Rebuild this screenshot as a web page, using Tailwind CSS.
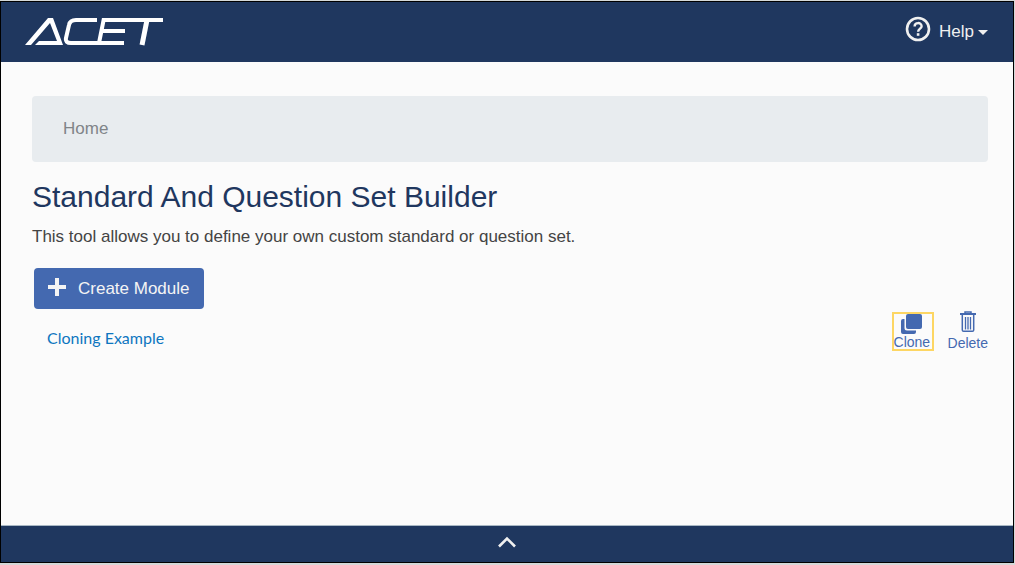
<!DOCTYPE html>
<html lang="en">
<head>
<meta charset="utf-8">
<meta name="viewport" content="width=device-width, initial-scale=1">
<title>ACET - Standard And Question Set Builder</title>
<script src="https://cdn.jsdelivr.net/npm/@tailwindcss/browser@4"></script>
</head>
<body class="flex min-h-screen flex-col bg-[#d4d8d8] pt-px pr-px pb-0.5 font-['Liberation_Sans',Arial,sans-serif]">
<div class="flex grow flex-col border border-black bg-[#fbfbfb]">
  <header class="flex h-[60px] items-center justify-between bg-[#1f375f] pr-[25px] pl-6">
    <a href="#" aria-label="ACET home" class="block">
      <svg class="block h-7 w-[138px]" viewBox="0 0 138 28" fill="none" stroke="#fff" stroke-width="4" aria-hidden="true">
        <path fill="#fff" stroke="none" d="M0 27 23 0h5l10 27H10l4-4h18L25 5 6 27z"/>
        <path d="M72 2H51q-6 0-7 5l-3 13q-1 5 5 5h53M79 0l-5 25M77 2h61M77 13h23"/>
        <path stroke-width="5" d="m122 2-5 25"/>
      </svg>
    </a>
    <button type="button" class="flex items-center text-[17px] text-[#f0f0f0]">
      <svg class="mr-2 mb-1.5 size-[26px]" viewBox="0 0 26 26" fill="none" stroke="#f0f0f0" aria-hidden="true">
        <circle cx="13" cy="13" r="11" stroke-width="2.6"/>
        <path stroke-width="2.4" d="M9.600 10.400C9.600 6 16.600 6 16.600 10.200 16.600 12.600 13.100 12.800 13.100 15.800"/>
        <path stroke-width="2.6" d="M13.100 17.200v2.600"/>
      </svg>
      <span>Help</span>
      <svg class="ml-1 h-[5px] w-2.5" viewBox="0 0 10 5" fill="#f0f0f0" aria-hidden="true"><path d="M0 0h10L5 5z"/></svg>
    </button>
  </header>

  <main class="grow pt-[34px] pr-[25px] pl-[31px]">
    <nav aria-label="Breadcrumb" class="flex h-[66px] items-center rounded bg-[#e8ecef] px-[31px] text-[17px] text-[#808488]">
      <a href="#">Home</a>
    </nav>
    <h1 class="mt-[15px] text-[30px] leading-10 text-[#1f375f]">Standard And Question Set Builder</h1>
    <p class="mt-1.5 text-[17px] leading-7 text-[#444]">This tool allows you to define your own custom standard or question set.</p>
    <button type="button" class="mt-[17px] ml-0.5 flex h-[41px] items-center rounded bg-[#4469b0] px-3.5 text-[17px] text-[#f4f4f4]">
      <svg class="mr-3 mb-1 size-[18px]" viewBox="0 0 18 18" stroke="#f4f4f4" stroke-width="4" aria-hidden="true"><path d="M9 0v18M0 9h18"/></svg>
      Create Module
    </button>
    <div class="flex items-start justify-between pt-0.5 pl-[15px]">
      <a href="#" class="mt-[15px] font-[Lato,sans-serif] text-base leading-6 text-[#0d76c0]">Cloning Example</a>
      <div class="flex gap-3.5 text-sm leading-4 text-[#4469b0]">
        <button type="button" class="mt-px flex h-[39px] w-[42px] flex-col items-start border-2 border-[#fdd663]">
          <svg class="ml-[7px] h-5 w-[21px] shrink-0" viewBox="0 0 21 20" fill="#4469b0" aria-hidden="true">
            <rect x="5" width="16" height="15" rx="2"/>
            <path d="M3.500 5H2Q0 5 0 7v11q0 2 2 2h11q2 0 2-2v-1.500H6q-2.500 0-2.500-2.500z"/>
          </svg>
          <span>Clone</span>
        </button>
        <button type="button" class="flex flex-col items-center">
          <svg class="mb-0.5 h-[22px] w-4" viewBox="0 0 16 22" fill="none" stroke="#4469b0" aria-hidden="true">
            <path stroke-width="2" d="M0 3h16"/>
            <path stroke-width="1.500" d="M5 2.500V1h6v1.500M2.300 4v15q0 1.300 1.300 1.300h8.800q1.300 0 1.300-1.300V4"/>
            <path stroke-width="1.300" d="M5.500 6v12.500M8 6v12.500M10.500 6v12.500"/>
          </svg>
          <span>Delete</span>
        </button>
      </div>
    </div>
  </main>

  <footer class="flex h-[37px] items-center justify-center border-t border-[#a9b8c4] bg-[#1f375f]">
    <button type="button" aria-label="Expand footer">
      <svg class="mb-1 block h-3 w-[18px]" viewBox="0 0 18 12" fill="none" stroke="#f0f0f0" stroke-width="2.600" aria-hidden="true"><path d="m1 10.500 8-8 8 8"/></svg>
    </button>
  </footer>
</div>
</body>
</html>
